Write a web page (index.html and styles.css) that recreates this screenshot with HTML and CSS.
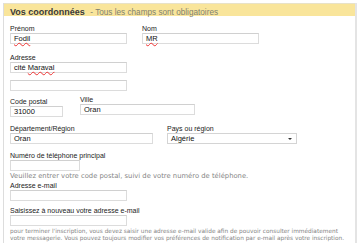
FILE: index.html
```html
<!DOCTYPE html>
<html lang="fr">
<head>
  <meta charset="UTF-8" />
  <title>Vos coordonnées</title>
  <link rel="stylesheet" href="styles.css">
</head>
<body>

  <div class="panel">
    <div class="panel-head">
      <span class="title">Vos coordonnées</span>
      <span class="subtitle">- Tous les champs sont obligatoires</span>
    </div>

    <div class="panel-body">
      <div class="row">
        <div class="field">
          <label>Prénom</label>
          <div class="input w117"><span class="typo">Fodil</span></div>
        </div>
        <div class="field">
          <label>Nom</label>
          <div class="input w117"><span class="typo">MR</span></div>
        </div>
      </div>

      <div class="row r-addr">
        <div class="field">
          <label>Adresse</label>
          <div class="input w117">cité <span class="typo">Maraval</span></div>
        </div>
      </div>

      <div class="row r-addr2">
        <div class="input w117"></div>
      </div>

      <div class="row r-city">
        <div class="field shift">
          <label>Code postal</label>
          <div class="input w53">31000</div>
        </div>
        <div class="field">
          <label>Ville</label>
          <div class="input w115">Oran</div>
        </div>
      </div>

      <div class="row r-region">
        <div class="field">
          <label>Département/Région</label>
          <div class="input w143">Oran</div>
        </div>
        <div class="field">
          <label>Pays ou région</label>
          <div class="input select w130">Algérie<span class="arrow"></span></div>
        </div>
      </div>

      <div class="row r-phone">
        <div class="field">
          <label>Numéro de téléphone principal</label>
          <div class="input w70"></div>
        </div>
      </div>
      <p class="hint">Veuillez entrer votre code postal, suivi de votre numéro de téléphone.</p>

      <div class="row">
        <div class="field">
          <label>Adresse e-mail</label>
          <div class="input w117"></div>
        </div>
      </div>

      <div class="row r-mail2">
        <div class="field">
          <label>Saisissez à nouveau votre adresse e-mail</label>
          <div class="input w117"></div>
        </div>
      </div>
      <p class="note">pour terminer l'inscription, vous devez saisir une adresse e-mail valide afin de pouvoir consulter immédiatement<br>votre messagerie. Vous pouvez toujours modifier vos préférences de notification par e-mail après votre inscription.</p>
    </div>
  </div>

</body>
</html>
```

FILE: styles.css
```css
body {
  margin: 0;
  padding: 3px 0 0 3px;
  background: #fff;
  font-family: "Liberation Sans", Arial, sans-serif;
  color: #222;
}

.panel {
  width: 354px;
  height: 240px;
  border-left: 1px solid #ddd;
  border-right: 2px solid #e4e4e4;
  box-sizing: border-box;
  overflow: hidden;
}

.panel-head {
  height: 13px;
  background: #f9e59b;
  border-top: 1px solid #e8e2c8;
  padding-left: 6px;
  box-sizing: border-box;
  white-space: nowrap;
  line-height: 12px;
}

.title {
  font-size: 9px;
  font-weight: 700;
  color: #3a3a3a;
}

.subtitle {
  font-size: 8.2px;
  color: #7f8270;
  margin-left: 1px;
}

.panel-body {
  padding: 8px 0 0 6px;
}

.row {
  display: flex;
  align-items: flex-start;
  gap: 15px;
}

.field {
  display: flex;
  flex-direction: column;
}

label {
  font-size: 7px;
  line-height: 9px;
  color: #222;
  white-space: nowrap;
}

.input {
  position: relative;
  height: 11px;
  border: 1px solid #dcdcdc;
  border-top-color: #d0d0d0;
  background: #fff;
  box-sizing: border-box;
  font-size: 7.5px;
  line-height: 9px;
  padding-left: 3px;
  color: #111;
  white-space: nowrap;
}

.typo {
  text-decoration: underline wavy #e33;
  text-decoration-thickness: 1px;
  text-underline-offset: 1px;
}

.w53 { width: 53px; }
.w70 { width: 70px; }
.w115 { width: 115px; }
.w117 { width: 117px; }
.w130 { width: 130px; }
.w143 { width: 143px; }

.select {
  border-color: #d4d4d4;
}

.arrow {
  position: absolute;
  right: 4px;
  top: 4px;
  border-left: 2px solid transparent;
  border-right: 2px solid transparent;
  border-top: 2px solid #333;
}

.r-addr { margin-top: 9px; }
.r-addr2 { margin-top: 7px; }
.r-city { margin-top: 4px; gap: 17px; }
.shift { margin-top: 2px; }
.r-region { margin-top: 7px; gap: 14px; }
.r-phone { margin-top: 7px; }
.r-mail2 { margin-top: 5px; }

.hint,
.note {
  font-family: "DejaVu Sans", Verdana, sans-serif;
  color: #858585;
  margin: 0;
  white-space: nowrap;
}

.hint {
  font-size: 6.8px;
  line-height: 10px;
}

.note {
  font-size: 5.8px;
  line-height: 7px;
  margin-top: 2px;
}
```
